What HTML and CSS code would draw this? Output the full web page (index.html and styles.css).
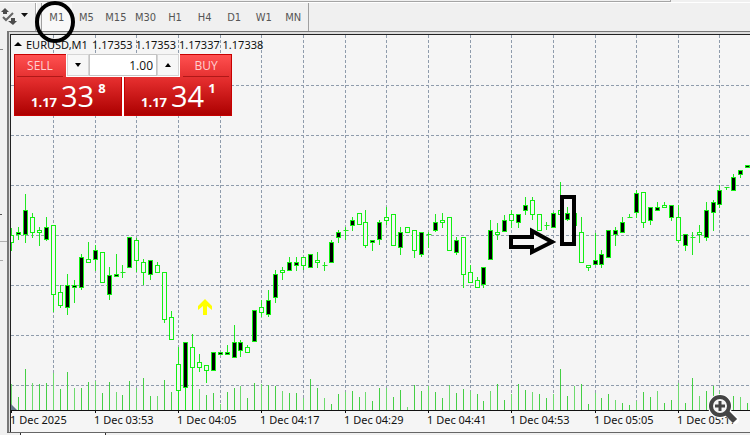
FILE: index.html
```html
<!DOCTYPE html>
<html lang="en">
<head>
    <meta charset="UTF-8">
    <meta name="viewport" content="width=device-width, initial-scale=1.0">
    <title>EURUSD,M1</title>
    <link rel="stylesheet" href="styles.css">
</head>
<body>
<div class="top-strip"></div>
<div class="toolbar">
    <button class="tool-menu" aria-label="Chart tools">
        <svg width="30" height="20" viewBox="0 0 30 20">
            <path d="M1 5 L5 1 L9 5 H7 V7 H3 V5 Z M8 14 H11 V11 H15 V14 H17 L13 18 Z" fill="#4c4c4c"/>
            <path d="M3 10 L6 13 L13 6" fill="none" stroke="#666" stroke-width="2"/>
            <path d="M21 6 H28 L24.5 10 Z" fill="#111"/>
        </svg>
    </button>
    <div class="timeframes">
        <button class="active">M1</button>
        <button>M5</button>
        <button>M15</button>
        <button>M30</button>
        <button>H1</button>
        <button>H4</button>
        <button>D1</button>
        <button>W1</button>
        <button>MN</button>
    </div>
</div>
<div class="workspace">
    <div class="gutter"></div>
    <div class="chart-window">
        <svg class="chart" id="chart" viewBox="11 35 739 397" preserveAspectRatio="xMinYMin slice"></svg>
        <div class="overlay">
            <div class="chart-title">
                <svg width="8" height="4" viewBox="0 0 8 4"><path d="M0 4 L4 0 L8 4 Z" fill="#000"/></svg>
                <span>EURUSD,M1</span>
                <span>1.17353 1.17353 1.17337 1.17338</span>
            </div>
            <div class="trade-panel">
                <button class="deal">
                    <span class="side">SELL</span>
                    <span class="price"><b>1.17</b><span class="big">33</span><sup>8</sup></span>
                </button>
                <button class="deal buy">
                    <span class="side">BUY</span>
                    <span class="price"><b>1.17</b><span class="big">34</span><sup>1</sup></span>
                </button>
                <div class="volume">
                    <button aria-label="Decrease volume"><svg width="6" height="4" viewBox="0 0 6 4"><path d="M0 0 H6 L3 4 Z"/></svg></button>
                    <input type="text" value="1.00" aria-label="Volume">
                    <button aria-label="Increase volume"><svg width="6" height="4" viewBox="0 0 6 4"><path d="M0 4 H6 L3 0 Z"/></svg></button>
                </div>
            </div>
        </div>
    </div>
</div>
<div class="tabs"><div class="tab"></div></div>

<!-- marks drawn over the terminal -->
<svg class="marks" viewBox="0 0 750 435" preserveAspectRatio="xMinYMin slice">
    <ellipse cx="55" cy="22" rx="18" ry="19" fill="none" stroke="#000" stroke-width="4"/>
    <path d="M511 237 H532 V231 L552 242 L532 252 V247 H511 Z" fill="none" stroke="#000" stroke-width="4"/>
    <rect x="562" y="197" width="12" height="47" fill="none" stroke="#000" stroke-width="4"/>
    <path d="M728 413 L735 420" stroke="#fff" stroke-width="8" stroke-linecap="round"/>
    <circle cx="720" cy="406" r="9" fill="#fff" stroke="#fff" stroke-width="6"/>
    <circle cx="720" cy="406" r="9" fill="#f5f5f5" stroke="#444" stroke-width="4"/>
    <path d="M720 401 V411 M715 406 H725" stroke="#444" stroke-width="3"/>
    <path d="M727 413 L735 421" stroke="#444" stroke-width="6"/>
</svg>
<script src="chart.js"></script>
</body>
</html>
```
FILE: styles.css
```css
* {
    box-sizing: border-box;
}
body {
    margin: 0;
    min-height: 100vh;
    display: flex;
    flex-direction: column;
    position: relative;
    overflow: hidden;
    background-color: #f0f0f0;
    color: #111;
    font-family: "Noto Sans", sans-serif;
    font-size: 11px;
}
button {
    font-family: inherit;
    border: none;
    padding: 0;
    background: none;
    cursor: pointer;
}
.top-strip {
    height: 2px;
    width: 671px;
    border-right: 1px solid #a5a5a5;
    border-bottom: 1px solid #a5a5a5;
}
.toolbar {
    height: 29px;
    display: flex;
    border-top: 1px solid #fff;
}
.tool-menu {
    width: 36px;
    padding-top: 3px;
    border-right: 1px solid #aaa;
    text-align: left;
}
.timeframes {
    display: flex;
    width: 273px;
    padding-left: 4px;
    border-left: 1px solid #fff;
    border-right: 1px solid #a0a0a0;
}
.timeframes button {
    flex: 1;
    color: #555;
    font-family: "DejaVu Sans Condensed", "DejaVu Sans", sans-serif;
    font-size: 11px;
}
.timeframes .active {
    background-color: #f8f8f8;
    border-left: 1px solid #a0a0a0;
}
.workspace {
    flex: 1;
    display: flex;
}
.gutter {
    width: 7px;
    background-color: #f0f0f0;
    background-image: linear-gradient(#b0b0b0, #b0b0b0), linear-gradient(#888, #888), linear-gradient(#555, #555), linear-gradient(#aaa, #aaa);
    background-position: 0 210px, 0 18px, 0 183px, 0 229px;
    background-size: 7px 1px, 3px 1px, 2px 1px, 3px 1px;
    background-repeat: no-repeat;
}
.chart-window {
    flex: 1;
    position: relative;
    border: 1px solid #777;
    border-width: 1px 0 0 2px;
    padding: 2px 0 0 1px;
    background-color: #ddd;
}
.chart {
    display: block;
    width: 100%;
    border: 1px solid #222;
    border-width: 1px 0 0 1px;
    background-color: #f5f5f5;
}
.overlay {
    position: absolute;
    top: 5px;
    left: 5px;
}
.chart-title {
    display: flex;
    align-items: center;
    gap: 4px;
    height: 14px;
    white-space: pre;
}
.trade-panel {
    position: relative;
    display: inline-flex;
    gap: 2px;
    margin-top: 3px;
    background-color: #fff;
    font-family: "Open Sans", sans-serif;
}
.deal {
    width: 108px;
    height: 62px;
    display: flex;
    flex-direction: column;
    border: 1px solid #c80000;
    background: linear-gradient(#ff5050, #e02a2a 45%, #ac0000);
    color: #fff;
}
.side {
    width: 46px;
    height: 22px;
    margin: 0 2px;
    border-bottom: 1px solid #b01818;
    color: #ffd0d0;
    font-size: 12px;
    line-height: 22px;
}
.buy .side {
    align-self: flex-end;
}
.price {
    display: flex;
    align-items: baseline;
    gap: 4px;
    padding-left: 16px;
    line-height: 38px;
}
.price b {
    font-size: 13px;
}
.price .big {
    font-size: 29px;
}
.price sup {
    align-self: flex-start;
    font-size: 13px;
    font-weight: bold;
    line-height: 22px;
}
.volume {
    position: absolute;
    top: 0;
    left: 52px;
    width: 114px;
    height: 23px;
    display: flex;
    padding: 0 1px 1px;
    background-color: #fff;
}
.volume button {
    flex: 1;
    border: 1px solid #d5d5d5;
    background-color: #f7f7f7;
}
.volume svg {
    display: block;
    margin: auto;
}
.volume input {
    width: 68px;
    padding: 0 3px;
    border: 1px solid #c4c4c4;
    color: #111;
    font-family: inherit;
    font-size: 12px;
    text-align: right;
}
.chart text {
    font-family: "Noto Sans", sans-serif;
    font-size: 11px;
    fill: #111;
}
.tabs {
    height: 3px;
    padding-left: 13px;
    border-top: 1px solid #666;
    margin-left: 7px;
}
.tab {
    width: 86px;
    height: 2px;
    border: 1px solid #333;
    border-width: 0 1px;
    background-color: #fff;
}
.marks {
    position: absolute;
    top: 0;
    left: 0;
    width: 100%;
    pointer-events: none;
}
```
FILE: chart.js
```js
// high, body top, body bottom, low, type (1 = filled, 0 = hollow, 2 = doji), volume top
const bars = [
    [228,235,243,251,0,384],[227,232,235,240,1,397],[194,210,235,243,1,369],[213,217,233,238,0,383],
    [227,230,233,246,0,384],[217,227,240,241,1,383],[225,225,295,312,0,373],[285,292,306,308,0,389],
    [274,285,308,315,1,372],[280,285,288,303,1,388],[254,257,288,290,1,388],[242,259,263,263,0,382],
    [245,250,260,271,1,381],[252,252,283,283,0,393],[267,275,295,300,1,382],[254,274,277,277,1,392],
    [265,272,272,278,2,395],[237,237,268,268,1,381],[238,240,261,272,0,388],[259,262,273,285,0,378],
    [260,260,275,280,1,396],[262,265,273,273,0,396],[272,272,320,323,0,380],[311,317,340,340,0,392],
    [347,364,391,410,0,390],[342,342,388,410,1,388],[334,347,368,410,0,370],[354,362,368,372,0,389],
    [365,365,371,383,0,395],[352,352,371,371,1,393],[352,352,355,355,1,404],[345,352,355,355,1,392],
    [325,342,358,358,1,388],[340,342,351,357,1,386],[345,347,353,353,0,398],[310,310,342,342,1,383],
    [300,307,313,317,0,384],[290,300,315,317,1,385],[270,274,298,303,1,386],[267,270,273,280,0,391],
    [257,262,271,271,1,393],[257,262,266,271,1,393],[257,257,266,270,0,398],[254,254,268,268,1,379],
    [252,260,263,268,0,388],[262,265,265,271,2,398],[240,242,263,263,1,404],[230,232,238,243,1,394],
    [227,230,230,240,2,392],[217,220,226,231,1,391],[213,213,225,225,0,397],[210,222,246,248,0,392],
    [240,240,243,251,1,401],[220,222,240,245,1,388],[207,217,221,225,0,388],[214,214,246,246,0,397],
    [227,232,248,255,1,390],[227,227,233,233,0,407],[230,230,251,258,0,385],[232,232,255,257,1,391],
    [232,234,234,248,2,386],[214,222,231,232,1,392],[213,220,223,228,0,398],[217,217,251,251,0,385],
    [237,240,253,255,1,393],[237,237,275,288,0,389],[265,272,283,283,0,391],[277,280,288,288,0,394],
    [267,267,285,288,1,401],[220,230,260,260,1,391],[223,232,235,240,0,384],[215,220,232,232,1,400],
    [210,214,221,228,0,394],[214,214,223,228,1,384],[197,205,211,215,1,390],[197,200,215,220,0,392],
    [214,214,231,231,0,394],[222,225,225,230,2,398],[212,213,228,228,1,394],[182,210,215,215,0,369],
    [207,213,220,221,1,396],[213,213,226,226,0,386],[217,232,263,263,0,384],[265,265,268,271,0,404],
    [233,260,265,265,1,393],[250,254,265,268,1,398],[230,230,258,258,1,394],[227,230,235,246,1,400],
    [217,222,233,233,1,403],[214,217,217,217,2,405],[190,193,213,218,1,401],[192,192,223,228,0,392],
    [207,207,221,225,1,397],[202,207,211,211,1,391],[202,205,208,208,0,403],[205,205,218,221,1,400],
    [205,217,241,243,0,383],[234,234,246,251,1,403],[232,237,237,255,2,378],[225,232,235,243,0,396],
    [202,210,238,241,1,391],[200,202,213,231,1,386],[185,190,205,208,1,392],[187,187,187,190,2,402],
    [174,177,191,191,1,396],[170,170,175,178,1,397],[165,165,168,168,1,403]
];
const labels = ['1 Dec 2025', '1 Dec 03:53', '1 Dec 04:05', '1 Dec 04:17', '1 Dec 04:29',
    '1 Dec 04:41', '1 Dec 04:53', '1 Dec 05:05', '1 Dec 05:17'];
const step = 6.942;
const axisY = 410;
const chart = document.getElementById('chart');

function barX(i) {
    return Math.round(11.4 + i * step) + 0.5;
}

function add(tag, attrs, text) {
    const el = document.createElementNS('http://www.w3.org/2000/svg', tag);
    for (const name in attrs) {
        el.setAttribute(name, attrs[name]);
    }
    if (text) {
        el.textContent = text;
    }
    chart.appendChild(el);
}

function line(x1, y1, x2, y2, color, dash) {
    add('line', { x1, y1, x2, y2, stroke: color, 'stroke-dasharray': dash || 'none' });
}

// grid
for (let y = 85; y < axisY; y += 50) {
    line(11, y + 0.5, 750, y + 0.5, '#8f9cac', '3 2');
}
for (let i = 6; i < bars.length; i += 6) {
    line(barX(i), 35, barX(i), axisY, '#8f9cac', '3 2');
}

// volumes
bars.forEach((bar, i) => line(barX(i), bar[5], barX(i), axisY, i % 3 ? '#45cf45' : '#6ddb6d'));

// candles
bars.forEach(([high, top, bottom, low, type], i) => {
    const x = barX(i);
    line(x, high, x, low, '#1fe81f');
    if (type === 2) {
        line(x - 2, top + 0.5, x + 3, top + 0.5, '#1fe81f');
    } else {
        add('rect', {
            x: x - 2, y: top + 0.5, width: 4, height: Math.max(bottom - top - 1, 1),
            fill: type ? '#000' : '#f5f5f5', stroke: '#12f012'
        });
    }
});

// signal arrow
add('path', { d: 'M205 299 L212 306 V310 L207 306 V315 H203 V306 L198 310 V306 Z', fill: '#ffff00' });

// time axis
line(11, axisY + 0.5, 750, axisY + 0.5, '#111');
add('path', { d: 'M11 404 L17 410 H11 Z', fill: '#66788a' });
labels.forEach((label, n) => {
    const x = barX(n * 12);
    line(x, axisY, x, axisY + 3, '#111');
    add('text', { x: x - 1.5, y: 424 }, label);
});
```
